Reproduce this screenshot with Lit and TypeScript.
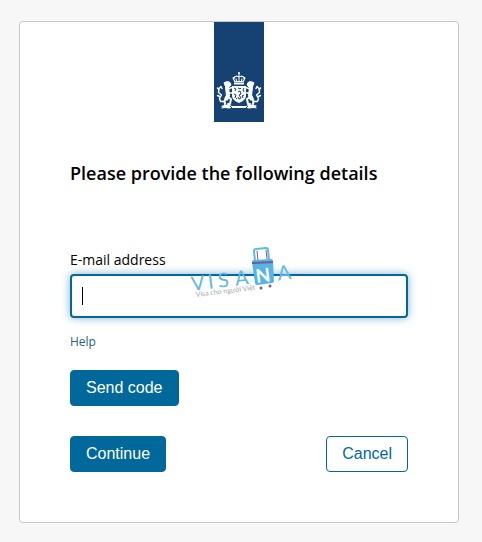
import { LitElement, html, css, svg } from "lit";
import { customElement, state } from "lit/decorators.js";

@customElement("state-logo")
export class StateLogo extends LitElement {
  static styles = css`
    :host {
      display: block;
      width: 50px;
      height: 100px;
    }

    svg {
      display: block;
    }
  `;

  // lion on the left side, mirrored for the right one
  lion() {
    return svg`
      <g fill="none" stroke="#fff" stroke-linecap="round" stroke-linejoin="round">
        <path d="M10.5 60.5l3-1 2.5 1 1 2.5-2 2-3 .5-1-2z" fill="#fff" stroke-width="1" />
        <path d="M13 65.5l.5 4 .5 4-1.5 3" stroke-width="4" />
        <path d="M12 76l-1.5 3 .5 3" stroke-width="2" />
        <path d="M14 75l3 2-1 5h-2" stroke-width="2" />
        <path d="M14 67l4-1.5M14 71h4" stroke-width="1.5" />
        <path d="M10.5 79.5h-4l-1-3 2-3.5-3-2.5.5-4 2-2 1 2M5.5 74.5l-2-1M5 68l-1.5-2" stroke-width="1.4" />
      </g>
    `;
  }

  render() {
    return html`
      <svg width="50" height="100" viewBox="0 0 50 100" role="img" aria-label="Coat of arms">
        <rect width="50" height="100" fill="#154273" />
        ${this.lion()}
        <g transform="translate(50 0) scale(-1 1)">${this.lion()}</g>
        <g fill="#fff">
          <circle cx="25" cy="51" r="1" />
          <path d="M24.5 51h1v8h-1z" />
          <path d="M20 60.5h10v2H20zM18 64h14v10q0 4-7 7-7-3-7-7z" />
          <circle cx="19.5" cy="56" r="1" />
          <circle cx="30.5" cy="56" r="1" />
        </g>
        <path
          d="M21 60l-1.5-3 1-2 2-1 2.5 1 2.5-1 2 1 1 2-1.5 3M22.5 59.5l-.5-3M27.5 59.5l.5-3M21 59.5h8"
          fill="none"
          stroke="#fff"
          stroke-width="1.1"
        />
        <path
          d="M7 84q4-2 8.5-1.5l2 1.5h15l2-1.5q4.5-.5 8.5 1.5l-1.5 1 1.5 1.5q-4-1-8 0l-2-.5h-16l-2 .5q-4-1-8 0L8.5 85z"
          fill="#fff"
        />
        <g fill="none" stroke="#154273" stroke-width="1">
          <path d="M20 66l2 1-1 2M20 72l2 1-1 3M30 66l-1 2 1 2M30 73l-2 1 1 2" />
          <path d="M24 66l2 1 1-1M24 70l2-1 1 3-2 1 2 3-2 1-1-2M23 76l-1 1" />
          <path d="M16 84l2 2M34 84l-2 2" />
        </g>
      </svg>
    `;
  }
}

@customElement("visana-mark")
export class VisanaMark extends LitElement {
  static styles = css`
    :host {
      display: block;
      pointer-events: none;
    }

    svg {
      display: block;
    }

    text {
      font-family: Lato, "Open Sans", sans-serif;
    }

    .name {
      font-size: 20px;
      fill: #5db9e6;
    }

    .initial {
      font-size: 19px;
      font-weight: 700;
      fill: #fff;
    }

    .slogan {
      font-size: 7px;
      fill: #a5a9ac;
    }
  `;

  render() {
    return html`
      <svg width="106" height="54" viewBox="0 0 106 54" role="img" aria-label="Visana">
        <path
          d="M65 15L64 5q0-2 2-2l10-1q2 0 2 2l1 10"
          fill="none"
          stroke="#5db9e6"
          stroke-width="2"
        />
        <path d="M67 5l1 9M76 4l1 9" stroke="#8a5b7d" stroke-width="1" />
        <path d="M64 14l17-1q2 0 2 2l1 20q0 2-2 2l-15 2q-2 0-2-2l-3-21q0-2 2-2z" fill="#55b5e5" />
        <path d="M62 17l21-1" stroke="#775b8c" stroke-width="2" />
        <circle cx="71" cy="42" r="1.5" fill="#775b8c" />
        <circle cx="80" cy="40" r="1.5" fill="#775b8c" />
        <g transform="translate(2 45) rotate(-7)">
          <text class="name" x="0">V</text>
          <text class="name" x="17">I</text>
          <text class="name" x="27">S</text>
          <text class="name" x="44">A</text>
          <text class="initial" x="65">N</text>
          <text class="name" x="87">A</text>
        </g>
        <text class="slogan" transform="translate(6 51) rotate(-7)">Visa cho người Việt</text>
      </svg>
    `;
  }
}

@customElement("app-root")
export class AppRoot extends LitElement {
  static styles = css`
    :host {
      display: block;
      box-sizing: border-box;
      min-height: 100vh;
      padding: 21px 23px 19px 19px;
      background: #f7f7f7;
      color: #000;
      font-family: "Open Sans", "Noto Sans", sans-serif;
    }

    * {
      box-sizing: border-box;
    }

    .card {
      display: flex;
      flex-direction: column;
      padding: 0 50px 50px;
      border: 1px solid #c8c8c8;
      border-radius: 4px;
      background: #fff;
    }

    .logo {
      align-self: center;
    }

    h1 {
      margin: 39px 0 65px;
      font-size: 18px;
      font-weight: 600;
      line-height: 24px;
    }

    form {
      display: flex;
      flex-direction: column;
      align-items: flex-start;
    }

    label {
      margin-bottom: 4px;
      font-size: 14px;
      line-height: 20px;
    }

    .field {
      position: relative;
      width: 100%;
    }

    input {
      display: block;
      width: 100%;
      height: 44px;
      padding: 0 10px;
      border: 2px solid #01689b;
      border-radius: 4px;
      outline: none;
      background: #fff;
      box-shadow: 0 0 8px rgba(1, 104, 155, 0.5);
      font: inherit;
      font-size: 16px;
      caret-color: transparent;
    }

    .caret {
      position: absolute;
      top: 13px;
      left: 12px;
      width: 1px;
      height: 18px;
      background: #000;
    }

    .mark {
      position: absolute;
      top: -28px;
      left: 120px;
    }

    .help {
      margin: 14px 0 18px;
      color: #275f85;
      font-size: 12px;
      line-height: 20px;
      text-decoration: none;
    }

    .actions {
      display: flex;
      justify-content: space-between;
      width: 100%;
      margin-top: 30px;
    }

    button {
      height: 36px;
      padding: 0 15px;
      border: 1px solid #01689b;
      border-radius: 4px;
      background: #01689b;
      color: #fff;
      font-family: "Liberation Sans", Arial, sans-serif;
      font-size: 16px;
      cursor: pointer;
    }

    .cancel {
      background: #fff;
      color: #01689b;
    }
  `;

  @state() email = "";

  handleInput(e: InputEvent) {
    this.email = (e.target as HTMLInputElement).value;
  }

  handleSubmit(e: Event) {
    e.preventDefault();
  }

  render() {
    return html`
      <main class="card">
        <state-logo class="logo"></state-logo>
        <h1>Please provide the following details</h1>
        <form @submit=${this.handleSubmit}>
          <label for="email">E-mail address</label>
          <div class="field">
            <input id="email" type="email" .value=${this.email} @input=${this.handleInput} />
            ${this.email ? "" : html`<span class="caret"></span>`}
            <visana-mark class="mark"></visana-mark>
          </div>
          <a class="help" href="#help">Help</a>
          <button type="button">Send code</button>
          <div class="actions">
            <button type="submit">Continue</button>
            <button class="cancel" type="button">Cancel</button>
          </div>
        </form>
      </main>
    `;
  }
}
